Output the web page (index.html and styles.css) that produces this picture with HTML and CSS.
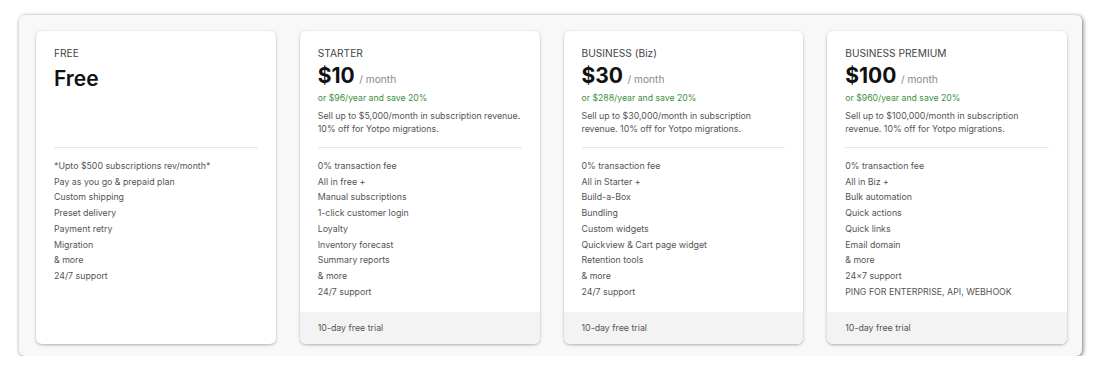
FILE: index.html
```html
<!DOCTYPE html>
<html lang="en">
  <head>
    <meta charset="UTF-8" />
    <meta name="viewport" content="width=device-width, initial-scale=1.0" />
    <title>Plans</title>
    <link rel="stylesheet" href="styles.css">
  </head>
  <body>
    <div class="plans-panel">
      <div class="plan-card">
        <div class="plan-head">
          <div class="plan-name">FREE</div>
          <div class="plan-price plan-price-free"><span class="amount amount-free">Free</span></div>
        </div>
        <ul class="plan-features">
          <li>*Upto $500 subscriptions rev/month*</li>
          <li>Pay as you go &amp; prepaid plan</li>
          <li>Custom shipping</li>
          <li>Preset delivery</li>
          <li>Payment retry</li>
          <li>Migration</li>
          <li>&amp; more</li>
          <li>24/7 support</li>
        </ul>
      </div>

      <div class="plan-card">
        <div class="plan-head">
          <div class="plan-name">STARTER</div>
          <div class="plan-price"><span class="amount">$10</span> <span class="per">/ month</span></div>
          <div class="plan-yearly">or $96/year and save 20%</div>
          <div class="plan-desc">Sell up to $5,000/month in subscription revenue. 10% off for Yotpo migrations.</div>
        </div>
        <ul class="plan-features">
          <li>0% transaction fee</li>
          <li>All in free +</li>
          <li>Manual subscriptions</li>
          <li>1-click customer login</li>
          <li>Loyalty</li>
          <li>Inventory forecast</li>
          <li>Summary reports</li>
          <li>&amp; more</li>
          <li>24/7 support</li>
        </ul>
        <div class="plan-trial">10-day free trial</div>
      </div>

      <div class="plan-card">
        <div class="plan-head">
          <div class="plan-name">BUSINESS (Biz)</div>
          <div class="plan-price"><span class="amount">$30</span> <span class="per">/ month</span></div>
          <div class="plan-yearly">or $288/year and save 20%</div>
          <div class="plan-desc">Sell up to $30,000/month in subscription revenue. 10% off for Yotpo migrations.</div>
        </div>
        <ul class="plan-features">
          <li>0% transaction fee</li>
          <li>All in Starter +</li>
          <li>Build-a-Box</li>
          <li>Bundling</li>
          <li>Custom widgets</li>
          <li>Quickview &amp; Cart page widget</li>
          <li>Retention tools</li>
          <li>&amp; more</li>
          <li>24/7 support</li>
        </ul>
        <div class="plan-trial">10-day free trial</div>
      </div>

      <div class="plan-card">
        <div class="plan-head">
          <div class="plan-name">BUSINESS PREMIUM</div>
          <div class="plan-price"><span class="amount">$100</span> <span class="per">/ month</span></div>
          <div class="plan-yearly">or $960/year and save 20%</div>
          <div class="plan-desc">Sell up to $100,000/month in subscription revenue. 10% off for Yotpo migrations.</div>
        </div>
        <ul class="plan-features">
          <li>0% transaction fee</li>
          <li>All in Biz +</li>
          <li>Bulk automation</li>
          <li>Quick actions</li>
          <li>Quick links</li>
          <li>Email domain</li>
          <li>&amp; more</li>
          <li>24×7 support</li>
          <li>PING FOR ENTERPRISE, API, WEBHOOK</li>
        </ul>
        <div class="plan-trial">10-day free trial</div>
      </div>
    </div>
  </body>
</html>
```

FILE: styles.css
```css
* {
  box-sizing: border-box;
}
html,
body {
  margin: 0;
  padding: 0;
  background-color: #ffffff;
  font-family: "Inter", "Liberation Sans", sans-serif;
}
.plans-panel {
  display: flex;
  gap: 24px;
  width: 1063px;
  height: 341px;
  margin: 15px 0 0 19px;
  padding: 16px 15px 12px 17px;
  background-color: #f8f8f8;
  border-radius: 6px;
  box-shadow: 1px 1px 4px rgba(0, 0, 0, 0.55);
}
.plan-card {
  display: flex;
  flex-direction: column;
  width: 240px;
  background-color: #ffffff;
  border-radius: 6px;
  box-shadow: 0 1px 3px rgba(0, 0, 0, 0.3);
  overflow: hidden;
}
.plan-head {
  flex: none;
  height: 117px;
  margin: 0 18px;
  padding-top: 14px;
  border-bottom: 1px solid #e8e8e8;
}
.plan-name {
  font-size: 10.2px;
  line-height: 16px;
  color: #444;
}
.plan-price {
  height: 29px;
  line-height: 29px;
}
.plan-price-free {
  padding-top: 3px;
  height: 32px;
}
.amount {
  font-size: 21px;
  font-weight: 700;
  color: #111;
}
.amount-free {
  font-weight: 600;
}
.per {
  font-size: 10.2px;
  color: #888;
}
.plan-yearly {
  font-size: 8.7px;
  line-height: 16px;
  color: #3e8e41;
}
.plan-desc {
  margin-top: 3px;
  font-size: 8.8px;
  line-height: 13px;
  color: #555;
}
.plan-features {
  flex: 1;
  list-style: none;
  margin: 0;
  padding: 10px 18px 0;
}
.plan-features li {
  font-size: 8.8px;
  line-height: 15.7px;
  color: #555;
}
.plan-trial {
  flex: none;
  height: 32px;
  line-height: 32px;
  padding: 0 18px;
  background-color: #f3f3f3;
  font-size: 8.8px;
  color: #555;
}
```
